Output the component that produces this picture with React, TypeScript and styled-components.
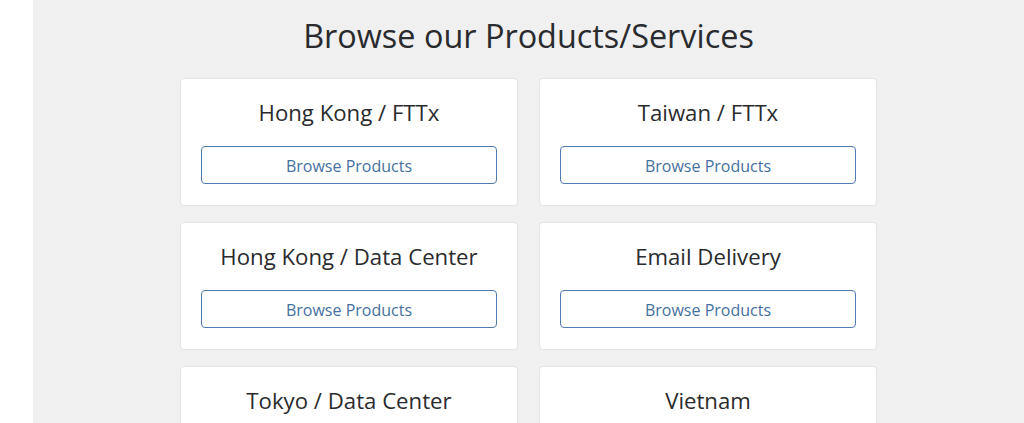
import React from "react";
import styled, { createGlobalStyle } from "styled-components";

const Global = createGlobalStyle`
  html, body { margin: 0; padding: 0; background: #ffffff; }
  body { font-family: "Open Sans", "Liberation Sans", sans-serif; color: #333; }
`;

const Page = styled.div`
  display: flex;
  min-height: 423px;
`;

const Side = styled.div`
  width: 33px;
  flex: none;
  background: #ffffff;
`;

const Main = styled.main`
  flex: 1;
  background: #f0f0f0;
  display: flex;
  flex-direction: column;
  align-items: center;
  padding-top: 13px;
`;

const Heading = styled.h1`
  margin: 0 0 21px;
  font-size: 32.4px;
  font-weight: 400;
  line-height: 44px;
  color: #2a2b2e;
  text-align: center;
`;

const Grid = styled.div`
  display: grid;
  grid-template-columns: 338px 338px;
  column-gap: 21px;
  row-gap: 16px;
`;

const Card = styled.div`
  background: #fff;
  border: 1px solid #e3e3e3;
  border-radius: 4px;
  padding: 18px 20px 20px;
  display: flex;
  flex-direction: column;
  align-items: stretch;
  height: 128px;
  box-sizing: border-box;
`;

const Title = styled.h3`
  margin: 0 0 17px;
  font-size: 22.2px;
  font-weight: 400;
  line-height: 32px;
  color: #2a2b2e;
  text-align: center;
`;

const Button = styled.a`
  display: flex;
  align-items: center;
  justify-content: center;
  height: 38px;
  padding-top: 1px;
  box-sizing: border-box;
  border: 1px solid #4f7cae;
  border-radius: 4px;
  color: #44719f;
  font-size: 16px;
  text-decoration: none;
  background: #fff;
`;

const items = [
  "Hong Kong / FTTx",
  "Taiwan / FTTx",
  "Hong Kong / Data Center",
  "Email Delivery",
  "Tokyo / Data Center",
  "Vietnam",
];

export default function App() {
  return (
    <>
      <Global />
      <Page>
        <Side />
        <Main>
          <Heading>Browse our Products/Services</Heading>
          <Grid>
            {items.map((t) => (
              <Card key={t}>
                <Title>{t}</Title>
                <Button href="#">Browse Products</Button>
              </Card>
            ))}
          </Grid>
        </Main>
      </Page>
    </>
  );
}
